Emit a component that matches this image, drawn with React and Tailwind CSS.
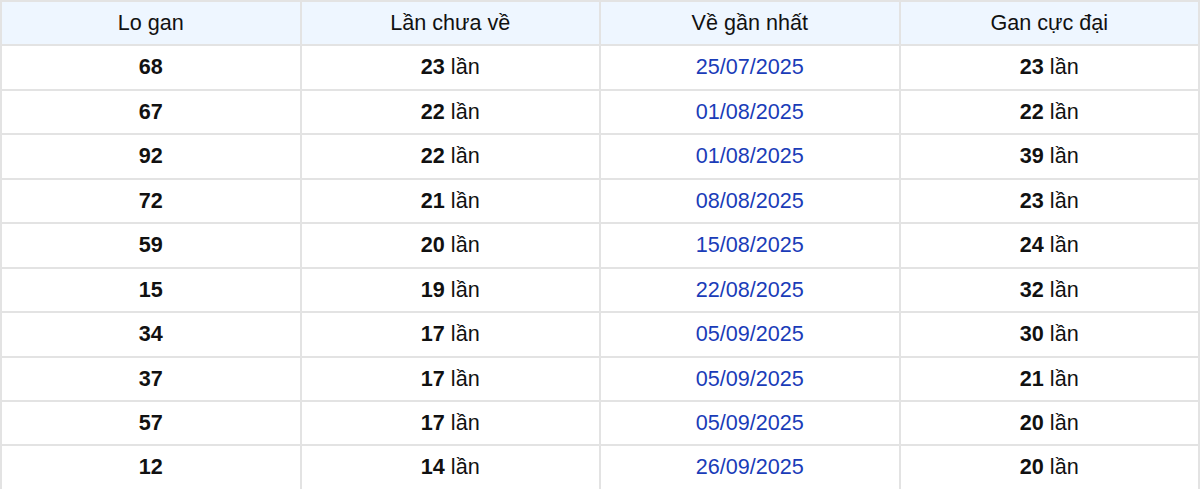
const rows = [
  ['68', '23', '25/07/2025', '23'],
  ['67', '22', '01/08/2025', '22'],
  ['92', '22', '01/08/2025', '39'],
  ['72', '21', '08/08/2025', '23'],
  ['59', '20', '15/08/2025', '24'],
  ['15', '19', '22/08/2025', '32'],
  ['34', '17', '05/09/2025', '30'],
  ['37', '17', '05/09/2025', '21'],
  ['57', '17', '05/09/2025', '20'],
  ['12', '14', '26/09/2025', '20'],
]

export default function App() {
  return (
    <div className="w-[1200px] bg-white font-['Liberation_Sans',Arial,sans-serif] text-[21.6px] text-[#111]">
      <table className="w-full table-fixed border-collapse border border-[#e3e3e3] text-center">
        <thead>
          <tr className="h-[44.45px] bg-[#eef6ff]">
            {['Lo gan', 'Lần chưa về', 'Về gần nhất', 'Gan cực đại'].map((h) => (
              <th key={h} className="border-2 border-[#e3e3e3] font-normal">{h}</th>
            ))}
          </tr>
        </thead>
        <tbody>
          {rows.map((r) => (
            <tr key={r[0]} className="h-[44.45px]">
              <td className="border-2 border-[#e3e3e3] font-bold">{r[0]}</td>
              <td className="border-2 border-[#e3e3e3]"><b>{r[1]}</b> lần</td>
              <td className="border-2 border-[#e3e3e3] text-[#1a3cb8]">{r[2]}</td>
              <td className="border-2 border-[#e3e3e3]"><b>{r[3]}</b> lần</td>
            </tr>
          ))}
        </tbody>
      </table>
    </div>
  )
}
